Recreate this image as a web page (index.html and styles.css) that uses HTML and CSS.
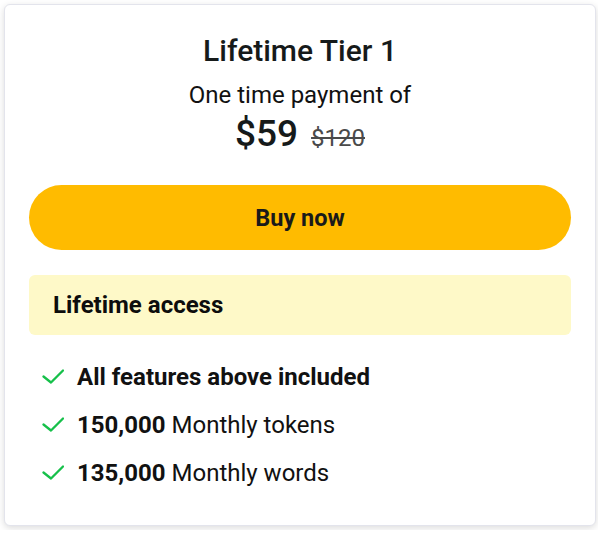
FILE: index.html
```html
<!DOCTYPE html>
<html>
<head>
<meta charset="utf-8">
<link rel="stylesheet" href="styles.css">
</head>
<body>
<div class="card">
  <h2 class="title">Lifetime Tier 1</h2>
  <div class="subtitle">One time payment of</div>
  <div class="price"><span class="now">$59</span><span class="was">$120</span></div>
  <button class="buy">Buy now</button>
  <div class="access">Lifetime access</div>
  <ul class="features">
    <li><svg class="check" viewBox="0 0 22 16"><path d="M1.5 7.5L9 13.5L21 1.5"/></svg><span><b>All features above included</b></span></li>
    <li><svg class="check" viewBox="0 0 22 16"><path d="M1.5 7.5L9 13.5L21 1.5"/></svg><span><b>150,000</b> Monthly tokens</span></li>
    <li><svg class="check" viewBox="0 0 22 16"><path d="M1.5 7.5L9 13.5L21 1.5"/></svg><span><b>135,000</b> Monthly words</span></li>
  </ul>
</div>
</body>
</html>
```
FILE: styles.css
```css
html, body { margin: 0; padding: 0; background: #ffffff; }
body { padding: 4px; font-family: Roboto, "Liberation Sans", sans-serif; color: #111; }
.card {
  width: 592px;
  height: 522px;
  box-sizing: border-box;
  border: 1px solid #e3e4ec;
  border-radius: 6px;
  background: #fff;
  box-shadow: 0 2px 7px rgba(0,0,0,0.14);
  padding: 28px 24px 0 24px;
  display: flex;
  flex-direction: column;
}
.title { margin: 0; text-align: center; font-size: 30px; font-weight: 500; line-height: 36px; color: #161a1a; }
.subtitle { text-align: center; font-size: 24px; line-height: 30px; margin-top: 11px; color: #111; }
.price { display: flex; justify-content: center; align-items: baseline; gap: 13px; margin-top: 2px; height: 44px; }
.now { font-size: 37px; line-height: 44px; font-weight: 500; color: #161a1a; }
.was { font-size: 24px; line-height: 30px; color: #4a4a4a; text-decoration: line-through; }
.buy {
  margin-top: 29px;
  height: 65px;
  flex: none;
  border: none;
  border-radius: 33px;
  background: #ffbb00;
  font-family: inherit;
  font-size: 23.5px;
  font-weight: 700;
  color: #1a1a1a;
  padding: 0;
}
.access {
  margin-top: 25px;
  height: 60px;
  flex: none;
  border-radius: 6px;
  background: #fef9c8;
  font-size: 24px;
  font-weight: 700;
  color: #0d0d0d;
  display: flex;
  align-items: center;
  padding-left: 24px;
}
.features { list-style: none; margin: 18px 0 0 0; padding: 0 0 0 12.5px; }
.features li { display: flex; align-items: center; height: 48px; font-size: 24px; color: #111; }
.features b { font-weight: 700; }
.check { width: 22px; height: 16px; margin-right: 13.5px; flex: none; fill: none; stroke: #16c04a; stroke-width: 2.3; stroke-linecap: round; stroke-linejoin: round; }
```
